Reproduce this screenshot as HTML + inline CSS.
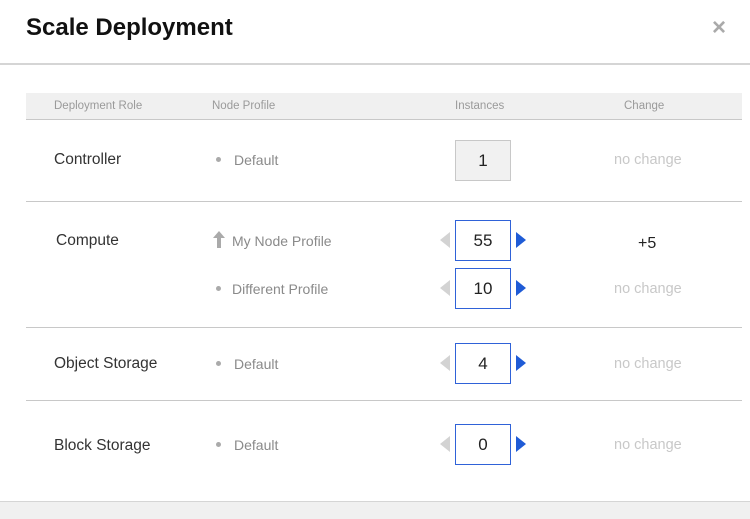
<!DOCTYPE html>
<html><head><style>
body{margin:0;width:750px;height:518px;background:#fff;font-family:"Liberation Sans",sans-serif;position:relative;overflow:hidden}
.a{position:absolute;white-space:nowrap}
.h{font-size:11.5px;color:#9a9a9a;top:100px}
.role{font-size:15.5px;color:#333;left:54px}
.prof{font-size:14px;color:#8a8a8a}
.dot{position:absolute;width:5px;height:5px;border-radius:50%;background:#aaa}
.nc{font-size:14.5px;color:#c8c8c8;left:614px}
.line{position:absolute;left:26px;width:716px;height:1px;background:#c8c8c8}
.box{position:absolute;left:455px;width:54px;height:39px;border:1px solid #2f62d8;background:#fff;font-size:17px;color:#222;text-align:center;line-height:39px}
.l{position:absolute;left:440px;width:0;height:0;border-top:8px solid transparent;border-bottom:8px solid transparent;border-right:10px solid #d3d3d3}
.r{position:absolute;left:516px;width:0;height:0;border-top:8px solid transparent;border-bottom:8px solid transparent;border-left:10px solid #1f5bd6}
</style></head><body>
<div class="a" style="left:26px;top:14px;font-size:24px;font-weight:bold;color:#111">Scale Deployment</div>
<div class="a" style="left:712px;top:14px;font-size:24px;font-weight:bold;color:#aaa">×</div>
<div style="position:absolute;left:0;top:63px;width:750px;height:2px;background:#d5d5d5"></div>
<div style="position:absolute;left:26px;top:93px;width:716px;height:26px;background:#f0f0f0;border-bottom:1px solid #c8c8c8"></div>
<div class="a h" style="left:54px">Deployment Role</div>
<div class="a h" style="left:212px">Node Profile</div>
<div class="a h" style="left:455px">Instances</div>
<div class="a h" style="left:624px">Change</div>

<div class="a role" style="top:151px">Controller</div>
<div class="dot" style="left:216px;top:157px"></div>
<div class="a prof" style="left:234px;top:152px">Default</div>
<div class="box" style="top:140px;background:#f1f1f1;border-color:#c8c8c8">1</div>
<div class="a nc" style="top:152px">no change</div>
<div class="line" style="top:201px"></div>

<div class="a role" style="top:232px;left:56px">Compute</div>
<svg class="a" style="left:212px;top:230px" width="14" height="18"><path d="M7 1 L13 8 H9 V18 H5 V8 H1 Z" fill="#aaa"/></svg>
<div class="a prof" style="left:232px;top:233px">My Node Profile</div>
<div class="l" style="top:232px"></div><div class="box" style="top:220px">55</div><div class="r" style="top:232px"></div>
<div class="a" style="left:638px;top:235px;font-size:16px;color:#222">+5</div>
<div class="dot" style="left:216px;top:286px"></div>
<div class="a prof" style="left:232px;top:281px">Different Profile</div>
<div class="l" style="top:280px"></div><div class="box" style="top:268px">10</div><div class="r" style="top:280px"></div>
<div class="a nc" style="top:281px">no change</div>
<div class="line" style="top:327px"></div>

<div class="a role" style="top:355px">Object Storage</div>
<div class="dot" style="left:216px;top:361px"></div>
<div class="a prof" style="left:234px;top:356px">Default</div>
<div class="l" style="top:355px"></div><div class="box" style="top:343px">4</div><div class="r" style="top:355px"></div>
<div class="a nc" style="top:356px">no change</div>
<div class="line" style="top:400px"></div>

<div class="a role" style="top:437px">Block Storage</div>
<div class="dot" style="left:216px;top:442px"></div>
<div class="a prof" style="left:234px;top:437px">Default</div>
<div class="l" style="top:436px"></div><div class="box" style="top:424px">0</div><div class="r" style="top:436px"></div>
<div class="a nc" style="top:437px">no change</div>

<div style="position:absolute;left:0;top:501px;width:750px;height:17px;background:#f0f0f0;border-top:1px solid #d5d5d5"></div>
</body></html>
